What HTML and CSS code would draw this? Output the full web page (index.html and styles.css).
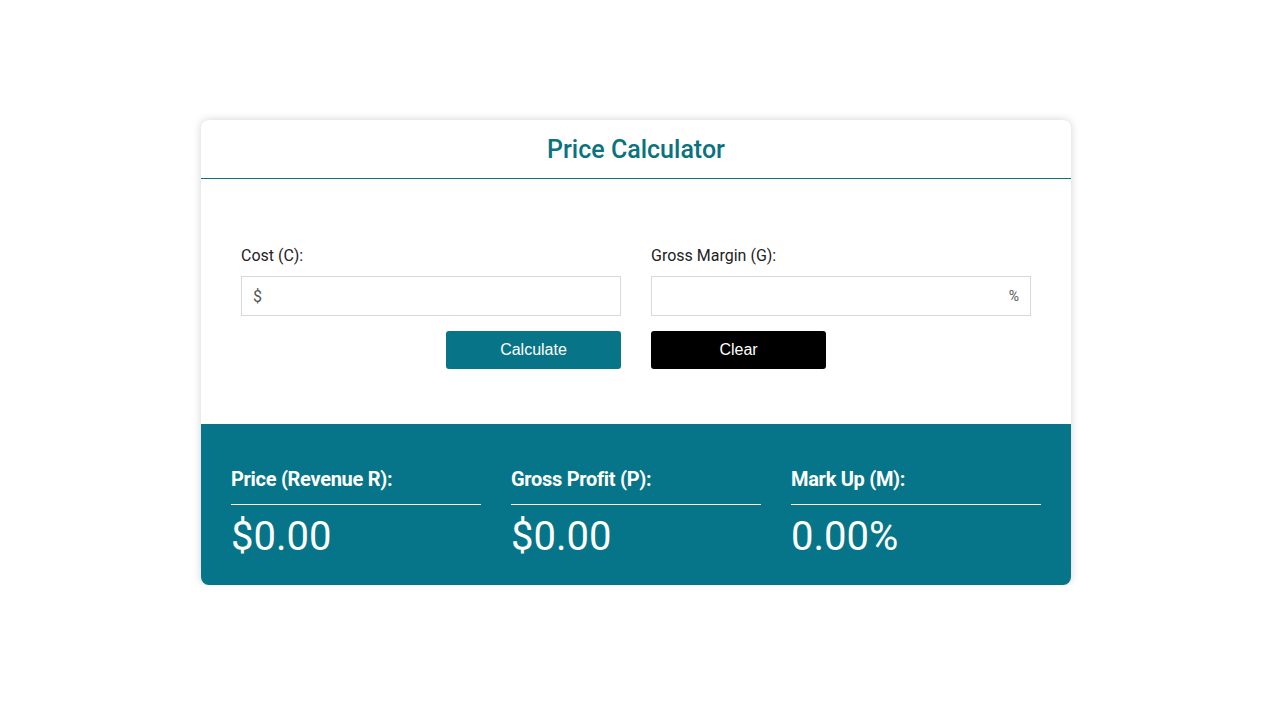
FILE: index.html
```html
<!DOCTYPE html>
<html>
<head>
<meta charset="utf-8">
<link rel="stylesheet" href="styles.css">
</head>
<body>
<div class="card">
  <div class="card-header"><h1>Price Calculator</h1></div>
  <div class="card-body">
    <div class="fields">
      <div class="field">
        <label>Cost (C):</label>
        <div class="input prefix"><span>$</span></div>
        <div class="btn-row right"><button class="btn calc">Calculate</button></div>
      </div>
      <div class="field">
        <label>Gross Margin (G):</label>
        <div class="input suffix"><span>%</span></div>
        <div class="btn-row"><button class="btn clear">Clear</button></div>
      </div>
    </div>
  </div>
  <div class="results">
    <div class="result">
      <div class="r-title">Price (Revenue R):</div>
      <div class="r-value">$0.00</div>
    </div>
    <div class="result">
      <div class="r-title">Gross Profit (P):</div>
      <div class="r-value">$0.00</div>
    </div>
    <div class="result">
      <div class="r-title">Mark Up (M):</div>
      <div class="r-value">0.00%</div>
    </div>
  </div>
</div>
</body>
</html>
```

FILE: styles.css
```css
* { box-sizing: border-box; }
body {
  margin: 0;
  background: #fff;
  font-family: Roboto, "Liberation Sans", sans-serif;
}
.card {
  width: 870px;
  margin: 120px 0 0 201px;
  background: #fff;
  border-radius: 8px;
  box-shadow: 0 0 8px rgba(0,0,0,0.18);
  overflow: hidden;
}
.card-header {
  height: 59px;
  border-bottom: 1px solid #0a7282;
  display: flex;
  align-items: center;
  justify-content: center;
}
.card-header h1 {
  margin: 0;
  font-size: 25px;
  font-weight: 500;
  color: #0b7280;
}
.card-body {
  padding: 67px 40px 55px;
}
.fields {
  display: grid;
  grid-template-columns: 1fr 1fr;
  column-gap: 30px;
}
.field label {
  display: block;
  font-size: 16px;
  line-height: 19px;
  color: #222;
  margin-bottom: 11px;
}
.input {
  height: 40px;
  border: 1px solid #d9d9d9;
  display: flex;
  align-items: center;
  padding: 0 11px;
  font-size: 16px;
  color: #555;
}
.input.suffix { justify-content: flex-end; font-size: 14px; }
.btn-row {
  display: flex;
  margin-top: 15px;
}
.btn-row.right { justify-content: flex-end; }
.btn {
  width: 175px;
  height: 38px;
  border: none;
  border-radius: 3px;
  color: #fff;
  font-family: "Liberation Sans", Arial, sans-serif;
  font-size: 16px;
  padding: 0;
}
.btn.calc { background: #077587; }
.btn.clear { background: #000; }
.results {
  background: #067589;
  display: grid;
  grid-template-columns: repeat(3, 1fr);
  column-gap: 30px;
  padding: 44px 30px 24px;
  color: #fff;
}
.r-title {
  font-size: 20px;
  font-weight: 700;
  letter-spacing: -0.3px;
  line-height: 23px;
  padding-bottom: 13px;
  border-bottom: 1px solid #fff;
}
.r-value {
  font-size: 40px;
  line-height: 48px;
  margin-top: 8px;
}
```
